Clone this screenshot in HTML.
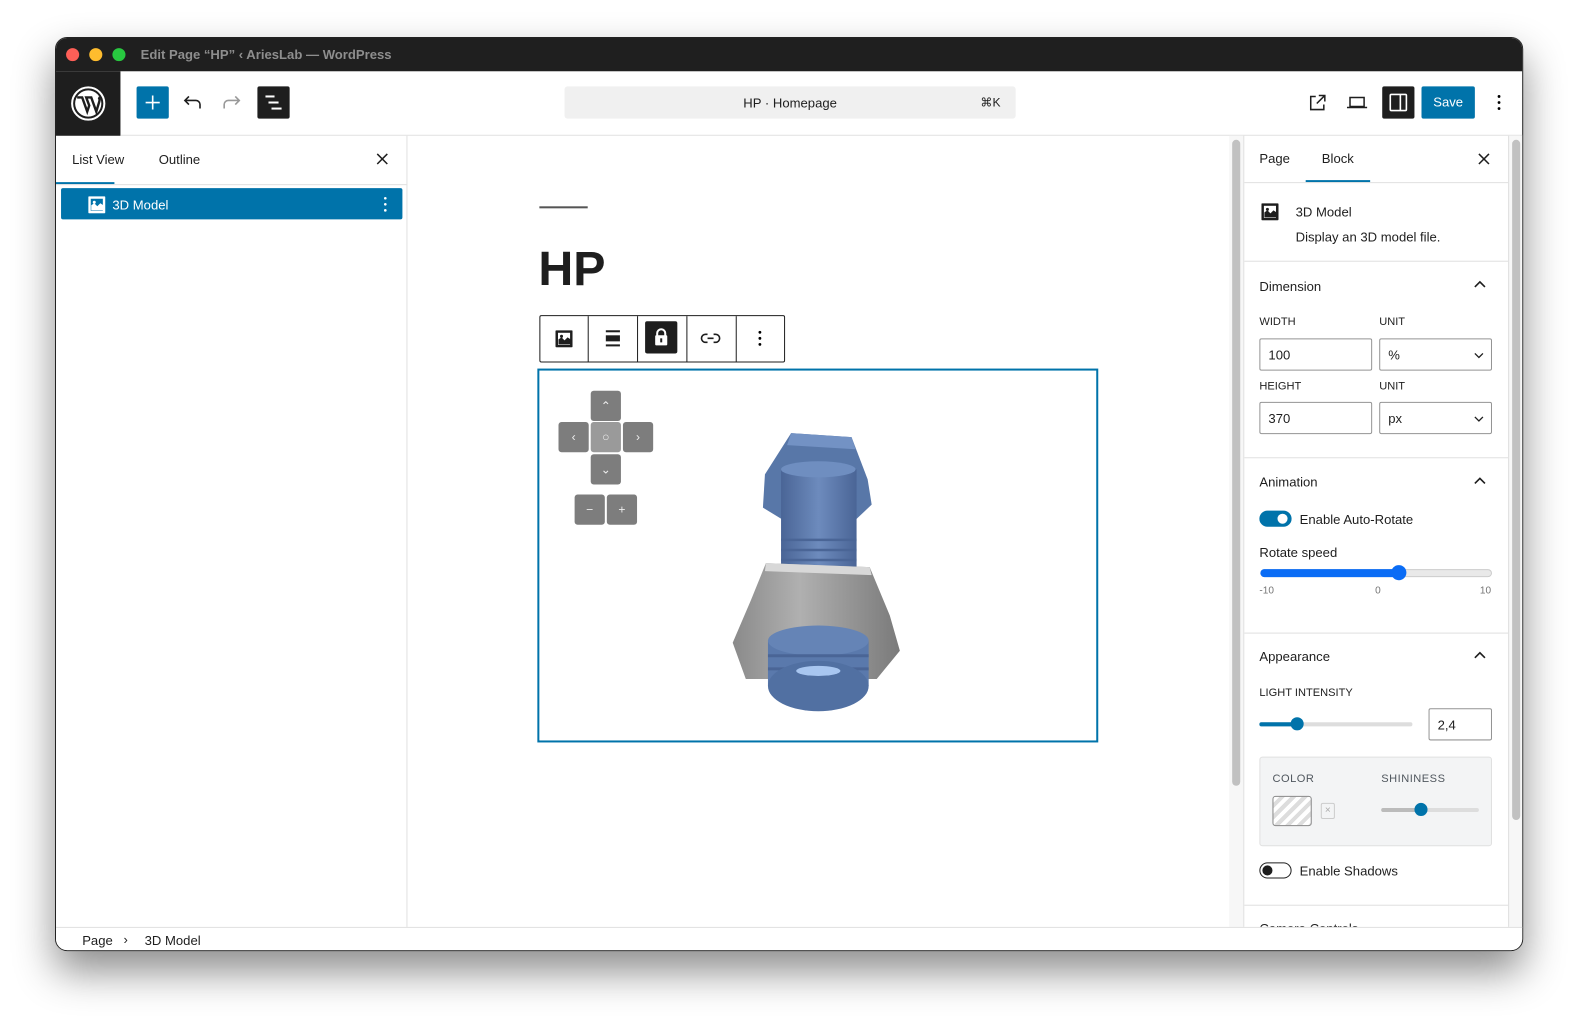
<!DOCTYPE html>
<html style="overflow:hidden;width:1578px;height:1024px"><head><meta charset="utf-8"><style>
*{box-sizing:border-box;margin:0;padding:0}
body{width:1578px;height:1024px;background:#fff;font-family:"Liberation Sans",sans-serif;position:relative;overflow:hidden;color:#1e1e1e}
.a{position:absolute}
#win{left:55px;top:37px;width:1458px;height:907px;border-radius:12px;overflow:hidden;background:#fff;border:1px solid #222;box-shadow:0 20px 40px rgba(0,0,0,.45);transform:scale(1.007,1.0078);transform-origin:0 0}
.t13{font-size:13px;white-space:nowrap}
.lab{font-size:11px;font-weight:500;text-transform:uppercase;color:#1e1e1e;white-space:nowrap}
.inp{border:1px solid #949494;border-radius:2px;height:32px;font-size:13px;padding:8px}
.hr{height:1px;background:#e0e0e0}
.btn{width:30px;height:30px;background:#7d7d7d;border-radius:3px;color:#eee;font-size:12px;text-align:center;line-height:30px}
</style></head><body>
<div id="win" class="a">
 <div class="a" style="left:0;top:0;width:1458px;height:33px;background:#1f1f1f"></div>
 <div class="a" style="left:10px;top:10px;width:13px;height:13px;border-radius:50%;background:#fe5f57"></div>
 <div class="a" style="left:33px;top:10px;width:13px;height:13px;border-radius:50%;background:#febc2e"></div>
 <div class="a" style="left:56px;top:10px;width:13px;height:13px;border-radius:50%;background:#28c840"></div>
 <div class="a" style="left:84px;top:9px;font-size:13px;font-weight:bold;color:#8e8e8e;white-space:nowrap">Edit Page “HP” ‹ AriesLab — WordPress</div>
 <div class="a" style="left:0;top:33px;width:64px;height:64px;background:#1e1e1e"></div>
 <svg class="a" style="left:14px;top:47px" width="36" height="36" viewBox="0 0 36 36"><circle cx="18" cy="18" r="16" fill="none" stroke="#fff" stroke-width="2"/><circle cx="18" cy="18" r="13" fill="#fff"/><path d="M7 12h5l5 14 2-6-3-8h5l5 14 3-10c1-3-1-4-1-4" fill="none" stroke="#1e1e1e" stroke-width="2.4"/></svg>
 <div class="a" style="left:80px;top:48px;width:32px;height:32px;background:#0073aa;border-radius:2px"></div>
 <svg class="a" style="left:80px;top:48px" width="32" height="32"><path d="M16 9v14M9 16h14" stroke="#fff" stroke-width="1.6"/></svg>
 <svg class="a" style="left:124px;top:54px" width="22" height="20" viewBox="0 0 22 20"><path d="M19 16v-4a4 4 0 0 0-4-4H4M8 4 4 8l4 4" fill="none" stroke="#1e1e1e" stroke-width="1.6"/></svg>
 <svg class="a" style="left:164px;top:54px" width="22" height="20" viewBox="0 0 22 20"><path d="M3 16v-4a4 4 0 0 1 4-4h11M14 4l4 4-4 4" fill="none" stroke="#999" stroke-width="1.6"/></svg>
 <div class="a" style="left:200px;top:48px;width:32px;height:32px;background:#1e1e1e;border-radius:2px"></div>
 <div class="a" style="left:208px;top:57px;width:9px;height:1.6px;background:#fff"></div>
 <div class="a" style="left:211px;top:63px;width:10px;height:1.6px;background:#fff"></div>
 <div class="a" style="left:214px;top:69px;width:10px;height:1.6px;background:#fff"></div>
 <div class="a" style="left:505px;top:48px;width:448px;height:32px;background:#f0f0f0;border-radius:3px"></div>
 <div class="a t13" style="left:505px;top:57px;width:448px;text-align:center">HP · Homepage</div>
 <div class="a" style="left:918px;top:57px;font-size:12px">⌘K</div>
 <svg class="a" style="left:1243px;top:54px" width="20" height="20" viewBox="0 0 20 20"><path d="M8 4H3v13h13v-5M11 3h6v6M17 3l-8 8" fill="none" stroke="#1e1e1e" stroke-width="1.5"/></svg>
 <svg class="a" style="left:1281px;top:56px" width="22" height="16" viewBox="0 0 22 16"><path d="M4 3h14v9H4zM1 13h20" fill="none" stroke="#1e1e1e" stroke-width="1.5"/></svg>
 <div class="a" style="left:1317px;top:48px;width:32px;height:32px;background:#1e1e1e;border-radius:2px"></div>
 <svg class="a" style="left:1322px;top:54px" width="22" height="20" viewBox="0 0 22 20"><rect x="3" y="2" width="16" height="16" rx="1" fill="none" stroke="#fff" stroke-width="1.6"/><path d="M13 2v16" stroke="#fff" stroke-width="1.6"/></svg>
 <div class="a" style="left:1356px;top:48px;width:53px;height:32px;background:#0073aa;border-radius:2px;color:#fff;font-size:13px;font-weight:500;text-align:center;line-height:32px">Save</div>
 <svg class="a" style="left:1428px;top:55px" width="10" height="18"><circle cx="5" cy="3" r="1.4"/><circle cx="5" cy="9" r="1.4"/><circle cx="5" cy="15" r="1.4"/></svg>
 <div class="a hr" style="left:64px;top:96px;width:1394px"></div>
 <div class="a" style="left:348px;top:97px;width:1px;height:786px;background:#e0e0e0"></div>
 <div class="a t13" style="left:16px;top:113px">List View</div>
 <div class="a t13" style="left:102px;top:113px">Outline</div>
 <svg class="a" style="left:318px;top:114px" width="12" height="12"><path d="M1 1l10 10M11 1 1 11" stroke="#1e1e1e" stroke-width="1.5"/></svg>
 <div class="a" style="left:0;top:143px;width:58px;height:2px;background:#0073aa"></div>
 <div class="a hr" style="left:0;top:145px;width:348px"></div>
 <div class="a" style="left:5px;top:149px;width:339px;height:31px;background:#0073aa;border-radius:2px"></div>
 <svg class="a" style="left:32px;top:157px" width="17" height="17"><rect x="0" y="0" width="17" height="17" rx="1" fill="#fff"/><rect x="2.5" y="2.5" width="12" height="12" fill="#0073aa"/><path d="M3 14V9l3-2 3 3 3-3 3 2v5z" fill="#fff"/><circle cx="6" cy="6" r="1.5" fill="#fff"/></svg>
 <div class="a" style="left:56px;top:158px;color:#fff;font-size:13px">3D Model</div>
 <svg class="a" style="left:323px;top:156px" width="8" height="18"><g fill="#fff"><circle cx="4" cy="3" r="1.3"/><circle cx="4" cy="9" r="1.3"/><circle cx="4" cy="15" r="1.3"/></g></svg>
 <div class="a" style="left:480px;top:167px;width:48px;height:2px;background:#555"></div>
 <div class="a" style="left:479px;top:203px;font-size:48px;font-weight:bold;line-height:54px">HP</div>
 <div class="a" style="left:480px;top:275px;width:244px;height:47px;border:1px solid #1e1e1e;border-radius:2px;background:#fff"></div>
 <div class="a" style="left:528px;top:276px;width:1px;height:45px;background:#1e1e1e"></div>
 <div class="a" style="left:577px;top:276px;width:1px;height:45px;background:#1e1e1e"></div>
 <div class="a" style="left:626px;top:276px;width:1px;height:45px;background:#1e1e1e"></div>
 <div class="a" style="left:675px;top:276px;width:1px;height:45px;background:#1e1e1e"></div>
 <svg class="a" style="left:496px;top:290px" width="17" height="17"><rect width="17" height="17" rx="1" fill="#1e1e1e"/><rect x="2.5" y="2.5" width="12" height="12" fill="#fff"/><path d="M3 14V9l3-2 3 3 3-3 3 2v5z" fill="#1e1e1e"/><circle cx="6" cy="6" r="1.5" fill="#1e1e1e"/></svg>
 <div class="a" style="left:546px;top:290px;width:14px;height:2px;background:#1e1e1e"></div>
 <div class="a" style="left:546px;top:295px;width:14px;height:6px;background:#1e1e1e"></div>
 <div class="a" style="left:546px;top:304px;width:14px;height:2px;background:#1e1e1e"></div>
 <div class="a" style="left:585px;top:281px;width:32px;height:32px;background:#1e1e1e;border-radius:2px"></div>
 <div class="a" style="left:596px;top:288px;width:10px;height:10px;border:2px solid #fff;border-radius:5px 5px 0 0"></div>
 <div class="a" style="left:595px;top:295px;width:12px;height:10px;background:#fff;border-radius:1px"></div>
 <div class="a" style="left:600px;top:298px;width:2px;height:4px;background:#1e1e1e"></div>
 <svg class="a" style="left:640px;top:290px" width="20" height="16" viewBox="0 0 20 16"><path d="M7 4H5a4 4 0 0 0 0 8h2M13 4h2a4 4 0 0 1 0 8h-2M7 8h6" fill="none" stroke="#1e1e1e" stroke-width="1.6"/></svg>
 <svg class="a" style="left:694px;top:289px" width="10" height="18"><circle cx="5" cy="3" r="1.4"/><circle cx="5" cy="9" r="1.4"/><circle cx="5" cy="15" r="1.4"/></svg>
 <div class="a" style="left:478px;top:328px;width:557px;height:371px;border:2px solid #0073aa"></div>
 <div class="a btn" style="left:531px;top:350px">⌃</div>
 <div class="a btn" style="left:499px;top:381px">‹</div>
 <div class="a btn" style="left:531px;top:381px;background:#9a9a9a">○</div>
 <div class="a btn" style="left:563px;top:381px">›</div>
 <div class="a btn" style="left:531px;top:413px">⌄</div>
 <div class="a btn" style="left:515px;top:453px">−</div>
 <div class="a btn" style="left:547px;top:453px">+</div>
 <svg class="a" style="left:660px;top:388px" width="190" height="290" viewBox="0 0 190 290">
  <defs><linearGradient id="b" x1="0" x2="1"><stop offset="0" stop-color="#4a6596"/><stop offset=".5" stop-color="#6d8bbd"/><stop offset="1" stop-color="#4a6596"/></linearGradient>
  <linearGradient id="g" x1="0" x2="1"><stop offset="0" stop-color="#8a8a8a"/><stop offset=".4" stop-color="#b0b0b0"/><stop offset="1" stop-color="#7a7a7a"/></linearGradient></defs>
  <path d="M70 4 130 8 146 50 150 75 132 92H65L42 78 44 45z" fill="#5877a8"/>
  <path d="M70 4 130 8 134 20 66 16z" fill="#7392c4"/>
  <rect x="60" y="40" width="75" height="110" fill="url(#b)"/>
  <ellipse cx="97" cy="40" rx="37" ry="8" fill="#6f8ec0"/>
  <path d="M60 110h75M60 120h75M60 130h75" stroke="#4a6596" stroke-width="2.5"/>
  <path d="M45 133 148 137 168 185 178 220 155 248H25L12 212 30 170z" fill="url(#g)"/>
  <path d="M45 133 148 137 150 145 44 141z" fill="#d8d8d8"/>
  <rect x="47" y="210" width="100" height="45" fill="#5a79ac"/>
  <ellipse cx="97" cy="210" rx="50" ry="15" fill="#6584b6"/>
  <path d="M47 225h100M47 238h100" stroke="#4a6596" stroke-width="3"/>
  <ellipse cx="97" cy="255" rx="50" ry="25" fill="#5170a2"/>
  <ellipse cx="97" cy="240" rx="22" ry="5" fill="#a8c6f0"/>
 </svg>
 <div class="a" style="left:1165px;top:97px;width:14px;height:786px;background:#f7f7f7"></div>
 <div class="a" style="left:1168px;top:101px;width:8px;height:641px;background:#c1c1c1;border-radius:4px"></div>
 <div class="a" style="left:1179px;top:97px;width:1px;height:786px;background:#e0e0e0"></div>
 <div class="a" style="left:1442px;top:97px;width:16px;height:786px;background:#f7f7f7;border-left:1px solid #e0e0e0"></div>
 <div class="a" style="left:1446px;top:101px;width:8px;height:675px;background:#c1c1c1;border-radius:4px"></div>
 <div class="a t13" style="left:1195px;top:112px">Page</div>
 <div class="a t13" style="left:1257px;top:112px">Block</div>
 <svg class="a" style="left:1412px;top:114px" width="12" height="12"><path d="M1 1l10 10M11 1 1 11" stroke="#1e1e1e" stroke-width="1.5"/></svg>
 <div class="a" style="left:1241px;top:141px;width:64px;height:2px;background:#0073aa"></div>
 <div class="a hr" style="left:1180px;top:143px;width:262px"></div>
 <svg class="a" style="left:1197px;top:164px" width="17" height="17"><rect width="17" height="17" rx="1" fill="#1e1e1e"/><rect x="2.5" y="2.5" width="12" height="12" fill="#fff"/><path d="M3 14V9l3-2 3 3 3-3 3 2v5z" fill="#1e1e1e"/><circle cx="6" cy="6" r="1.5" fill="#1e1e1e"/></svg>
 <div class="a t13" style="left:1231px;top:165px">3D Model</div>
 <div class="a t13" style="left:1231px;top:190px">Display an 3D model file.</div>
 <div class="a hr" style="left:1180px;top:221px;width:262px"></div>
 <div class="a t13" style="left:1195px;top:239px;font-weight:500">Dimension</div>
 <svg class="a" style="left:1408px;top:240px" width="12" height="8"><path d="M1 7l5-5 5 5" fill="none" stroke="#1e1e1e" stroke-width="1.6"/></svg>
 <div class="a lab" style="left:1195px;top:276px">Width</div>
 <div class="a lab" style="left:1314px;top:276px">Unit</div>
 <div class="a inp" style="left:1195px;top:298px;width:112px">100</div>
 <div class="a inp" style="left:1314px;top:298px;width:112px">%</div>
 <svg class="a" style="left:1408px;top:312px" width="10" height="6"><path d="M1 1l4 4 4-4" fill="none" stroke="#1e1e1e" stroke-width="1.3"/></svg>
 <div class="a lab" style="left:1195px;top:340px">Height</div>
 <div class="a lab" style="left:1314px;top:340px">Unit</div>
 <div class="a inp" style="left:1195px;top:361px;width:112px">370</div>
 <div class="a inp" style="left:1314px;top:361px;width:112px">px</div>
 <svg class="a" style="left:1408px;top:375px" width="10" height="6"><path d="M1 1l4 4 4-4" fill="none" stroke="#1e1e1e" stroke-width="1.3"/></svg>
 <div class="a hr" style="left:1180px;top:416px;width:262px"></div>
 <div class="a t13" style="left:1195px;top:433px;font-weight:500">Animation</div>
 <svg class="a" style="left:1408px;top:435px" width="12" height="8"><path d="M1 7l5-5 5 5" fill="none" stroke="#1e1e1e" stroke-width="1.6"/></svg>
 <div class="a" style="left:1195px;top:469px;width:32px;height:16px;background:#0073aa;border-radius:8px"></div>
 <div class="a" style="left:1213px;top:472px;width:10px;height:10px;background:#fff;border-radius:50%"></div>
 <div class="a t13" style="left:1235px;top:470px">Enable Auto-Rotate</div>
 <div class="a t13" style="left:1195px;top:503px;font-weight:500">Rotate speed</div>
 <div class="a" style="left:1196px;top:527px;width:230px;height:8px;background:#e9e9e9;border:1px solid #ccc;border-radius:4px"></div>
 <div class="a" style="left:1196px;top:527px;width:138px;height:8px;background:#0a6cf5;border-radius:4px"></div>
 <div class="a" style="left:1326px;top:523px;width:15px;height:15px;background:#0a6cf5;border-radius:50%"></div>
 <div class="a" style="left:1195px;top:543px;font-size:10px;color:#757575">-10</div>
 <div class="a" style="left:1310px;top:543px;font-size:10px;color:#757575">0</div>
 <div class="a" style="left:1414px;top:543px;font-size:10px;color:#757575">10</div>
 <div class="a hr" style="left:1180px;top:590px;width:262px"></div>
 <div class="a t13" style="left:1195px;top:606px;font-weight:500">Appearance</div>
 <svg class="a" style="left:1408px;top:608px" width="12" height="8"><path d="M1 7l5-5 5 5" fill="none" stroke="#1e1e1e" stroke-width="1.6"/></svg>
 <div class="a lab" style="left:1195px;top:644px">Light Intensity</div>
 <div class="a" style="left:1195px;top:679px;width:152px;height:4px;background:#ddd;border-radius:2px"></div>
 <div class="a" style="left:1195px;top:679px;width:36px;height:4px;background:#0073aa;border-radius:2px"></div>
 <div class="a" style="left:1226px;top:674px;width:13px;height:13px;background:#0073aa;border-radius:50%"></div>
 <div class="a inp" style="left:1363px;top:665px;width:63px">2,4</div>
 <div class="a" style="left:1195px;top:713px;width:231px;height:89px;background:#f3f4f5;border:1px solid #e0e0e0;border-radius:3px"></div>
 <div class="a lab" style="left:1208px;top:729px;color:#50575e;letter-spacing:.5px">Color</div>
 <div class="a lab" style="left:1316px;top:729px;color:#50575e;letter-spacing:.5px">Shininess</div>
 <div class="a" style="left:1208px;top:752px;width:39px;height:30px;border:1px solid #888;border-radius:3px;background:repeating-linear-gradient(135deg,#fff 0 4px,#ddd 4px 8px)"></div>
 <div class="a" style="left:1256px;top:759px;width:14px;height:16px;border:1px solid #ccc;border-radius:2px;font-size:10px;color:#aaa;text-align:center;line-height:14px">×</div>
 <div class="a" style="left:1316px;top:764px;width:97px;height:4px;background:#ddd;border-radius:2px"></div>
 <div class="a" style="left:1316px;top:764px;width:40px;height:4px;background:#bbb;border-radius:2px"></div>
 <div class="a" style="left:1349px;top:759px;width:13px;height:13px;background:#0073aa;border-radius:50%"></div>
 <div class="a" style="left:1195px;top:818px;width:32px;height:16px;border:1px solid #1e1e1e;border-radius:8px"></div>
 <div class="a" style="left:1198px;top:821px;width:10px;height:10px;background:#1e1e1e;border-radius:50%"></div>
 <div class="a t13" style="left:1235px;top:819px">Enable Shadows</div>
 <div class="a hr" style="left:1180px;top:860px;width:262px"></div>
 <div class="a t13" style="left:1195px;top:876px;font-weight:500">Camera Controls</div>
 <div class="a" style="left:0;top:882px;width:1458px;height:25px;background:#fff;border-top:1px solid #e0e0e0"></div>
 <div class="a t13" style="left:26px;top:888px">Page</div>
 <div class="a t13" style="left:67px;top:887px">›</div>
 <div class="a t13" style="left:88px;top:888px">3D Model</div>
</div>
</body></html>
